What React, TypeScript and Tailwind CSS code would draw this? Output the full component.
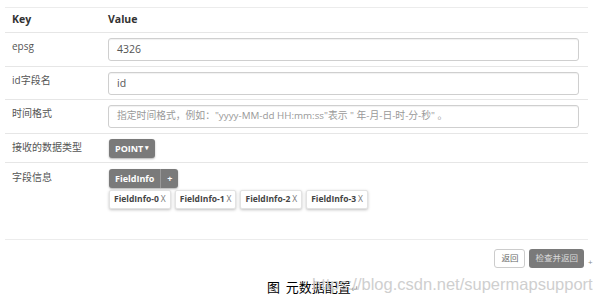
const latin = "font-['Open_Sans','Noto_Sans_CJK_SC',sans-serif]";

function Row({ label, children, className = "" }: { label: string; children: React.ReactNode; className?: string }) {
  return (
    <div className={`grid grid-cols-[103px_1fr] border-t border-[#e6e6e6] ${className}`}>
      <div className="pl-[7px] pt-[1px] text-[10px] leading-[14px] text-[#555]">{label}</div>
      <div className="pr-[9px]">{children}</div>
    </div>
  );
}

function Input({ value, placeholder }: { value?: string; placeholder?: string }) {
  return (
    <div className="flex h-[23px] items-center rounded-[3px] border border-[#cfcfcf] px-[8px] text-[10.5px] shadow-[inset_0_1px_1px_rgba(0,0,0,0.06)]">
      {value ? <span className="text-[#555]">{value}</span> : <span className="text-[9.8px] text-[#999]">{placeholder}</span>}
    </div>
  );
}

const fields = ["FieldInfo-0", "FieldInfo-1", "FieldInfo-2", "FieldInfo-3"];

export default function App() {
  return (
    <div className={`relative h-[301px] w-[593px] overflow-hidden bg-white ${latin}`}>
      <div className="mx-[5px] mt-[7px] border-t border-[#ececec]">
        <div className="grid h-[24px] grid-cols-[103px_1fr] items-center text-[10.5px] font-bold text-[#333]">
          <div className="pl-[7px]">Key</div>
          <div>Value</div>
        </div>

        <Row label="epsg" className="pb-[5px] pt-[5px]">
          <Input value="4326" />
        </Row>
        <Row label="id字段名" className="pb-[4px] pt-[5px]">
          <Input value="id" />
        </Row>
        <Row label="时间格式" className="pb-[5px] pt-[5px]">
          <Input placeholder={'指定时间格式，例如："yyyy-MM-dd HH:mm:ss"表示 " 年-月-日-时-分-秒" 。'} />
        </Row>
        <Row label="接收的数据类型" className="pb-[4px] pt-[5px]">
          <button className="ml-[1px] flex h-[19px] items-center gap-[2px] rounded-[3px] bg-[#7a7a7a] px-[6px] text-[9px] font-bold text-white shadow-[0_1px_2px_rgba(0,0,0,0.3)]">
            POINT
            <span className="text-[7px]">▾</span>
          </button>
        </Row>
        <Row label="字段信息" className="h-[77px] pt-[6px]">
          <div className="ml-[1px] flex h-[19px] w-fit overflow-hidden rounded-[3px] bg-[#7a7a7a] text-[9px] font-bold text-white shadow-[0_1px_2px_rgba(0,0,0,0.3)]">
            <span className="flex items-center px-[6px]">FieldInfo</span>
            <span className="flex w-[18px] items-center justify-center border-l border-[#999]">+</span>
          </div>
          <div className="ml-[1px] mt-[2px] flex gap-[4px]">
            {fields.map((f) => (
              <div
                key={f}
                className="flex h-[19px] items-center gap-[2px] rounded-[2px] border border-[#e3e3e3] bg-white px-[4px] text-[8.5px] font-bold text-[#444] shadow-[0_1px_3px_rgba(0,0,0,0.25)]"
              >
                {f}
                <span className="font-normal text-[#777]">X</span>
              </div>
            ))}
          </div>
        </Row>

        <div className="flex items-start justify-end border-t border-[#ececec] pr-[4px] pt-[9px]">
          <button className="h-[19px] rounded-[3px] border border-[#ccc] bg-white px-[6px] text-[8.5px] text-[#666]">
            返回
          </button>
          <button className="ml-[4px] h-[19px] rounded-[3px] bg-[#7a7a7a] px-[6px] text-[8.5px] text-[#ddd]">
            检查并返回
          </button>
        </div>
      </div>

      <span className="absolute left-[588px] top-[256px] text-[8px] text-[#888]">+</span>

      <div className="pl-[267px] pt-[12px] font-['Noto_Sans_CJK_SC',sans-serif] text-[13px] leading-[14px] text-black">
        图&nbsp;&nbsp;元数据配置<span className="text-[9px] text-[#888]">↵</span>
      </div>

      <div className="absolute left-[312px] top-[274px] font-['Liberation_Sans',sans-serif] text-[16.5px] leading-[20px] text-[#cfcfcf]">
        https://blog.csdn.net/supermapsupport
      </div>
    </div>
  );
}
